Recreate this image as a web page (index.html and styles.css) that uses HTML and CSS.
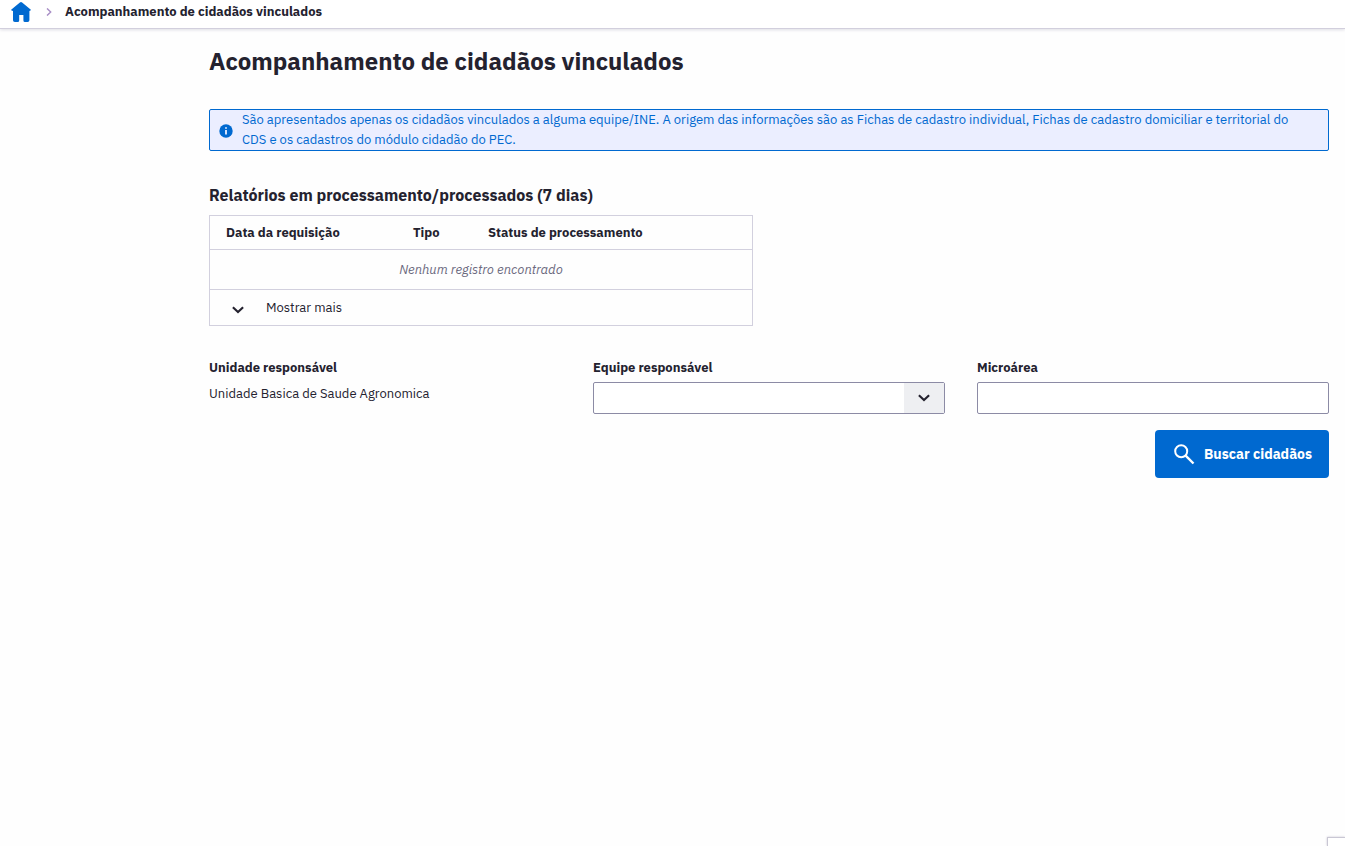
FILE: index.html
```html
<!DOCTYPE html>
<html lang="pt-BR">
<head>
<meta charset="utf-8">
<title>Acompanhamento de cidadãos vinculados</title>
<link rel="stylesheet" href="styles.css">
</head>
<body>
<nav class="breadcrumb">
  <svg class="home" viewBox="0 0 20 20" width="20" height="20"><path d="M11.1 .5 L19.6 7.4 Q20.2 8 19.4 8.6 L18.4 9 V18.2 Q18.4 20 16.6 20 H14 Q12.4 20 12.4 18.4 V13 H8.2 V18.4 Q8.2 20 6.6 20 H3.8 Q2 20 2 18.2 V9 L0.6 8.6 Q-.2 8 0.4 7.4 L8.9 .5 Q10 -.3 11.1 .5 Z" fill="#0069d0"/></svg>
  <svg class="sep" viewBox="0 0 6 8" width="6" height="8"><path d="M1 .4 L4.7 4 L1 7.6" fill="none" stroke="#a98fc6" stroke-width="1.4"/></svg>
  <span class="crumb">Acompanhamento de cidadãos vinculados</span>
</nav>
<main class="page">
  <h1 class="title">Acompanhamento de cidadãos vinculados</h1>
  <div class="alert">
    <svg class="info" viewBox="0 0 14 14" width="14" height="14"><circle cx="7" cy="7" r="6.7" fill="#0069d0"/><path d="M6.1 3.2h1.8v1.6H6.1zM6.1 6h1.8v4.6H6.1z" fill="#ebeeff"/></svg>
    <p class="alert-text">São apresentados apenas os cidadãos vinculados a alguma equipe/INE. A origem das informações são as Fichas de cadastro individual, Fichas de cadastro domiciliar e territorial do CDS e os cadastros do módulo cidadão do PEC.</p>
  </div>
  <h2 class="subtitle">Relatórios em processamento/processados (7 dias)</h2>
  <section class="table">
    <div class="row head"><span class="c-date">Data da requisição</span><span class="c-type">Tipo</span><span class="c-status">Status de processamento</span></div>
    <div class="row empty"><span>Nenhum registro encontrado</span></div>
    <div class="row more"><svg viewBox="0 0 12 8" width="12" height="8"><path d="M.9 1.2 L6 6 L11.1 1.2" fill="none" stroke="#24222f" stroke-width="2.1"/></svg><span>Mostrar mais</span></div>
  </section>
  <form class="fields">
    <div class="field"><span class="label">Unidade responsável</span><span class="value">Unidade Basica de Saude Agronomica</span></div>
    <div class="field"><span class="label">Equipe responsável</span><div class="input"><span class="arrow"><svg viewBox="0 0 12 8" width="12" height="8"><path d="M.9 1.2 L6 6 L11.1 1.2" fill="none" stroke="#24222f" stroke-width="2.1"/></svg></span></div></div>
    <div class="field"><span class="label">Microárea</span><div class="input"></div></div>
  </form>
  <div class="actions"><button class="search" type="button"><svg viewBox="0 0 21 21" width="21" height="21"><circle cx="7.2" cy="7.2" r="6" fill="none" stroke="#fff" stroke-width="2"/><path d="M11.4 11.4 L19.5 19.5" stroke="#fff" stroke-width="2.4"/></svg><span>Buscar cidadãos</span></button></div>
</main>
<div class="corner"></div>
</body>
</html>
```
FILE: styles.css
```css
* { box-sizing: border-box; }
body { margin: 0; height: 846px; overflow: hidden; background: #fefefe; color: #24222f; font: 13px/20px "IBM Plex Sans", Roboto, "Liberation Sans", sans-serif; }
svg { display: block; flex: none; }
h1, h2, p { margin: 0; }
span { white-space: nowrap; }
.breadcrumb { display: flex; align-items: center; height: 29px; padding: 0 0 5px 11px; border-bottom: 1px solid #d2cfdd; box-shadow: 0 1px 3px #dedde4; background: #fff; }
.home { margin-top: 1px; }
.sep { margin: 0 13px 0 15px; }
.crumb { font-weight: 700; line-height: 20px; margin-top: 1px; }
.page { padding: 0 16px 0 209px; }
.title { margin-top: 16px; height: 32px; font-size: 24px; line-height: 32px; font-weight: 700; }
.alert { display: flex; align-items: center; margin-top: 32px; height: 42px; padding: 0 16px 0 9px; border: 1px solid #0069d0; border-radius: 2px; background: #ebeeff; color: #0069d0; }
.info { margin: 2px 9px 0 0; }
.subtitle { margin-top: 34px; height: 21px; font-size: 16px; line-height: 20px; font-weight: 700; }
.table { margin-top: 9px; width: 544px; height: 111px; border: 1px solid #d2d0de; }
.row { display: flex; align-items: center; }
.head { height: 34px; padding-left: 16px; font-weight: 700; border-bottom: 1px solid #d2d0de; }
.c-date { width: 187px; }
.c-type { width: 75px; }
.empty { justify-content: center; height: 40px; color: #6c6a7e; font-style: italic; border-bottom: 1px solid #d2d0de; }
.more { gap: 22px; height: 35px; padding-left: 22px; }
.more svg { margin-top: 4px; }
.fields { display: grid; grid-template-columns: repeat(3, 352px); gap: 32px; margin-top: 31px; height: 57px; }
.field { display: flex; flex-direction: column; }
.label { height: 25px; line-height: 22px; font-weight: 700; }
.value { line-height: 24px; }
.input { display: flex; justify-content: flex-end; height: 32px; border: 1px solid #8c8ba5; border-radius: 2px; background: #fff; }
.arrow { display: flex; align-items: center; justify-content: center; width: 40px; background: #eeeff2; }
.actions { display: flex; justify-content: flex-end; margin-top: 16px; }
.search { display: flex; align-items: center; gap: 9px; width: 174px; height: 48px; padding: 0 0 0 19px; border: 0; border-radius: 4px; background: #0069d0; color: #fff; font: 700 14px/20px "IBM Plex Sans", Roboto, "Liberation Sans", sans-serif; }
.corner { position: absolute; right: 0; bottom: 0; width: 18px; height: 9px; border: solid #c9c7d4; border-width: 1px 0 0 1px; box-shadow: 0 0 2px #c9c7d4; background: #fff; }
```
